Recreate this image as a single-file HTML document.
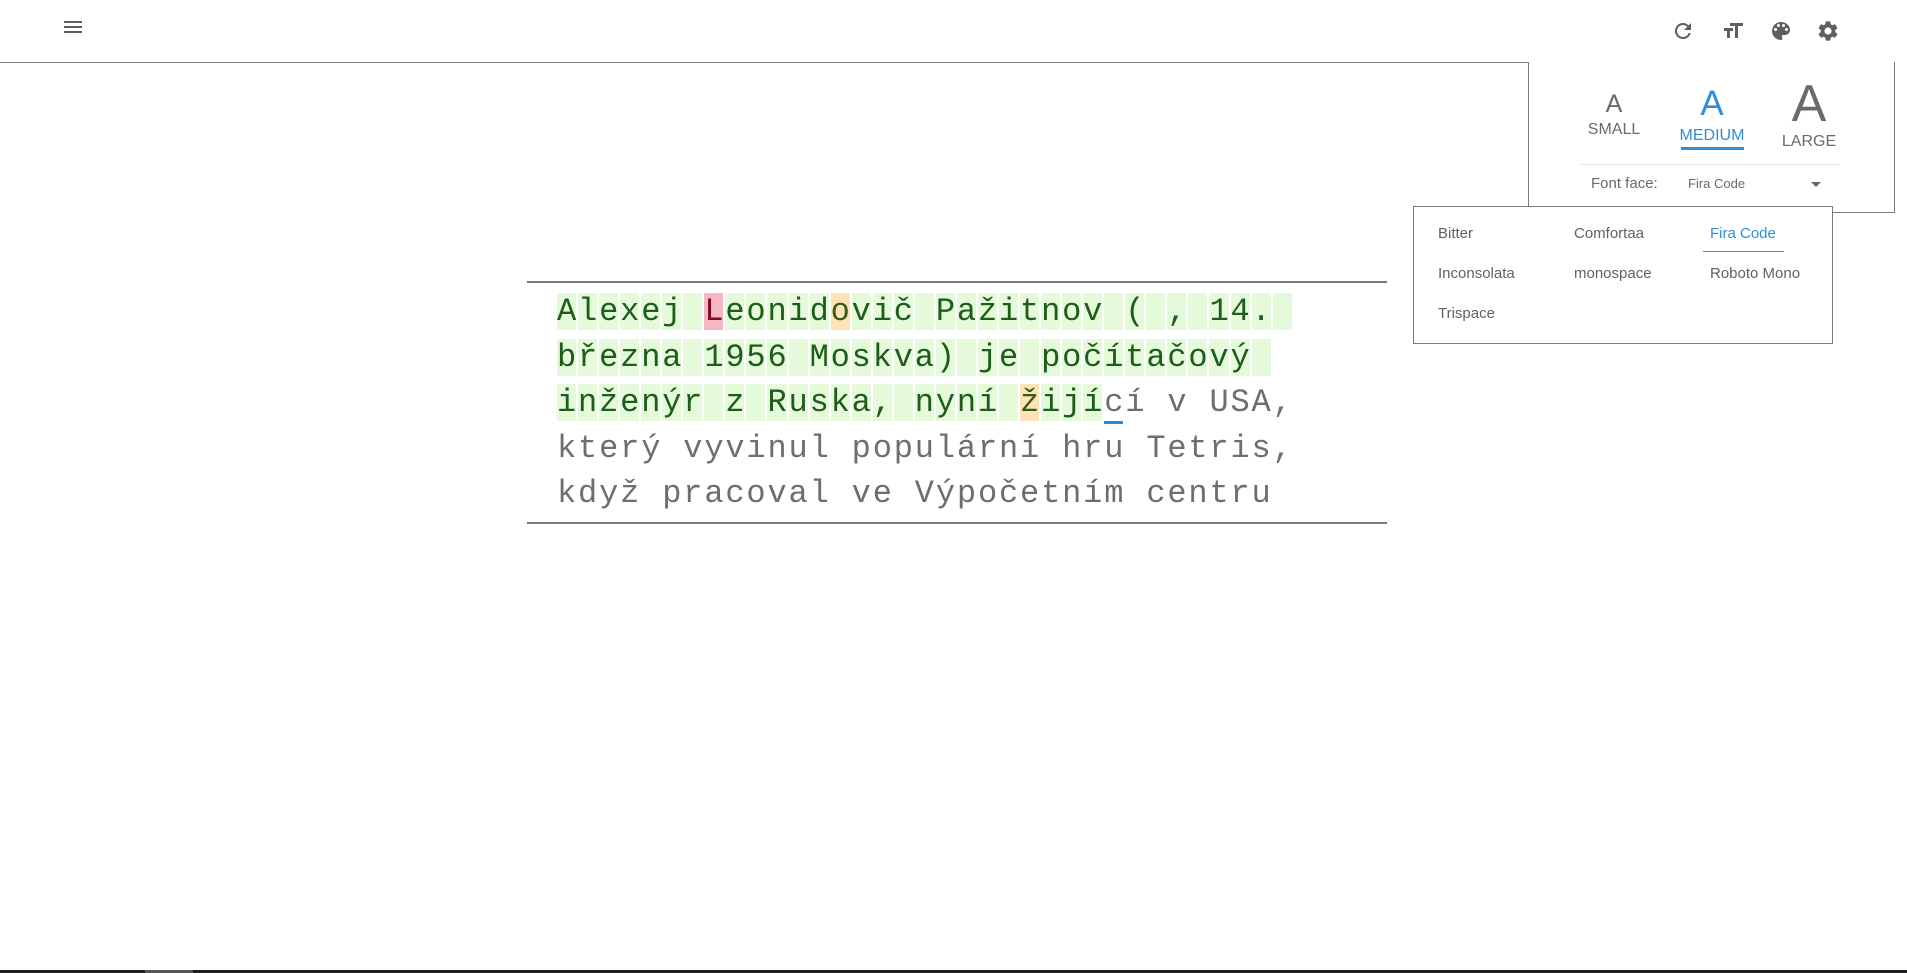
<!DOCTYPE html>
<html><head><meta charset="utf-8"><style>
html,body{margin:0;padding:0;background:#fff;width:1907px;height:973px;overflow:hidden;position:relative;font-family:"Liberation Sans",sans-serif}
.abs{position:absolute}
.hline{position:absolute;background:#7a7a7a}
.ic{position:absolute;width:24px;height:24px;fill:#5f5f5f}
.txt{position:absolute;left:557px;top:293px;font-family:"Liberation Mono",monospace;font-size:32px}
.row{height:45.6px;white-space:pre}
.row span{display:inline-block;width:19.05px;margin-right:2px;height:37px;line-height:37px;text-align:center;vertical-align:top;color:#6e6e6e;overflow:visible}
.row span.g{background:#e4fadb;color:#1d5c19}
.row span.r{background:#f7b6c3;color:#7d0b1c}
.row span.o{background:#fde3b7;color:#3b5a10}
.row span.cur{position:relative}
.row span.cur:after{content:"";position:absolute;left:0;right:0;bottom:-3px;height:3px;background:#2a8ad8}
.dd{position:absolute;font-size:15px;color:#616161}
</style></head><body>
<div class="abs" style="left:64px;top:21px;width:18px;height:2px;background:#5f5f5f"></div>
<div class="abs" style="left:64px;top:26px;width:18px;height:2px;background:#5f5f5f"></div>
<div class="abs" style="left:64px;top:31px;width:18px;height:2px;background:#5f5f5f"></div>
<svg class="ic" style="left:1671px;top:19px" viewBox="0 0 24 24"><path d="M17.65 6.35A7.96 7.96 0 0 0 12 4a8 8 0 1 0 7.73 10h-2.08A6 6 0 1 1 12 6c1.66 0 3.140.69 4.22 1.78L13 11h7V4l-2.35 2.35z"/></svg>
<svg class="ic" style="left:1721px;top:19px" viewBox="0 0 24 24"><path d="M9 4v3h5v12h3V7h5V4H9zm-6 8h3v7h3v-7h3V9H3v3z"/></svg>
<svg class="ic" style="left:1769px;top:19px" viewBox="0 0 24 24"><path d="M12 3a9 9 0 0 0 0 18c.83 0 1.5-.67 1.5-1.5 0-.39-.15-.74-.39-1.01-.23-.26-.38-.61-.38-.99 0-.83.67-1.5 1.5-1.5H16c2.760 0 5-2.24 5-5 0-4.42-4.03-8-9-8zm-5.5 9a1.5 1.5 0 1 1 0-3 1.5 1.5 0 0 1 0 3zm3-4a1.5 1.5 0 1 1 0-3 1.5 1.5 0 0 1 0 3zm5 0a1.5 1.5 0 1 1 0-3 1.5 1.5 0 0 1 0 3zm3 4a1.5 1.5 0 1 1 0-3 1.5 1.5 0 0 1 0 3z"/></svg>
<svg class="ic" style="left:1816px;top:19px" viewBox="0 0 24 24"><path d="M19.14 12.94c.04-.3.06-.61.06-.94 0-.32-.02-.64-.07-.94l2.03-1.58a.49.49 0 0 0 .12-.61l-1.92-3.32a.49.49 0 0 0-.59-.22l-2.39.96c-.5-.38-1.03-.7-1.62-.94l-.36-2.54a.48.48 0 0 0-.48-.41h-3.84c-.24 0-.43.17-.47.41l-.36 2.54c-.59.24-1.13.57-1.62.94l-2.390-.96a.48.48 0 0 0-.59.22L2.74 8.87c-.12.21-.08.47.12.61l2.03 1.58c-.05.3-.09.63-.09.94s.02.64.07.94l-2.030 1.58a.49.49 0 0 0-.12.61l1.92 3.32c.12.22.37.29.59.22l2.39-.96c.5.38 1.03.7 1.62.94l.36 2.54c.05.24.24.41.48.41h3.84c.24 0 .44-.17.47-.41l.36-2.54c.59-.24 1.13-.56 1.62-.94l2.39.96c.22.08.47 0 .59-.22l1.92-3.32c.12-.22.07-.47-.12-.61l-2.01-1.58zM12 15.6A3.6 3.6 0 1 1 12 8.4a3.6 3.6 0 0 1 0 7.2z"/></svg>
<div class="hline" style="left:0;top:62px;width:1528px;height:1px"></div>

<div class="abs" style="left:1528px;top:62px;width:365px;height:150px;border-left:1px solid #7a7a7a;border-right:1px solid #7a7a7a;border-bottom:1px solid #7a7a7a;background:#fff"></div>
<div class="abs" style="left:1574px;top:90px;width:80px;text-align:center;color:#6a6a6a;font-size:25px">A</div>
<div class="abs" style="left:1574px;top:121px;width:80px;text-align:center;color:#6a6a6a;font-size:16px">SMALL</div>
<div class="abs" style="left:1672px;top:84px;width:80px;text-align:center;color:#2d8fdb;font-size:35px">A</div>
<div class="abs" style="left:1672px;top:127px;width:80px;text-align:center;color:#2d8fdb;font-size:16px">MEDIUM</div>
<div class="abs" style="left:1681px;top:147px;width:63px;height:3px;background:#2d8fdb"></div>
<div class="abs" style="left:1759px;top:74px;width:100px;text-align:center;color:#6a6a6a;font-size:52px">A</div>
<div class="abs" style="left:1759px;top:133px;width:100px;text-align:center;color:#6a6a6a;font-size:16px">LARGE</div>
<div class="abs" style="left:1581px;top:164px;width:259px;height:1px;background:#e2e2e2"></div>
<div class="abs" style="left:1591px;top:175px;color:#6a6a6a;font-size:15px">Font face:</div>
<div class="abs" style="left:1688px;top:176px;color:#6a6a6a;font-size:13px">Fira Code</div>
<div class="abs" style="left:1811px;top:182px;width:0;height:0;border-left:5px solid transparent;border-right:5px solid transparent;border-top:5px solid #6a6a6a"></div>

<div class="abs" style="left:1413px;top:206px;width:418px;height:136px;border:1px solid #7a7a7a;background:#fff"></div>
<div class="dd" style="left:1438px;top:225px">Bitter</div>
<div class="dd" style="left:1574px;top:225px">Comfortaa</div>
<div class="dd" style="left:1710px;top:225px;color:#2d8fdb">Fira Code</div>
<div class="abs" style="left:1703px;top:251px;width:81px;height:1px;background:#2d8fdb"></div>
<div class="dd" style="left:1438px;top:265px">Inconsolata</div>
<div class="dd" style="left:1574px;top:265px">monospace</div>
<div class="dd" style="left:1710px;top:265px">Roboto Mono</div>
<div class="dd" style="left:1438px;top:305px">Trispace</div>

<div class="hline" style="left:527px;top:281px;width:860px;height:2px"></div>
<div class="hline" style="left:527px;top:522px;width:860px;height:2px"></div>
<div class="txt" id="t"><div class="row" data-m="gggggggrgggggogggggggggggggggggggggg">Alexej Leonidovič Pažitnov ( , 14. </div><div class="row" data-m="ggggggggggggggggggggggggggggggggggg">března 1956 Moskva) je počítačový </div><div class="row" data-m="ggggggggggggggggggggggogggc">inženýr z Ruska, nyní žijící v USA,</div><div class="row" data-m="">který vyvinul populární hru Tetris,</div><div class="row" data-m="">když pracoval ve Výpočetním centru</div></div>
<script>
document.querySelectorAll('.row').forEach(function(r){
  var s=r.textContent, m=r.getAttribute('data-m'), h='';
  for(var i=0;i<s.length;i++){
    var c=m[i]||'', cls=c==='c'?'cur':c;
    var ch=s[i]===' '?'&nbsp;':s[i];
    h+='<span class="'+cls+'">'+ch+'</span>';
  }
  r.innerHTML=h;
});
</script>

<div class="abs" style="left:0;top:970px;width:1907px;height:3px;background:#1e1e1e"></div>
<div class="abs" style="left:145px;top:970px;width:48px;height:3px;background:#555"></div>
</body></html>
